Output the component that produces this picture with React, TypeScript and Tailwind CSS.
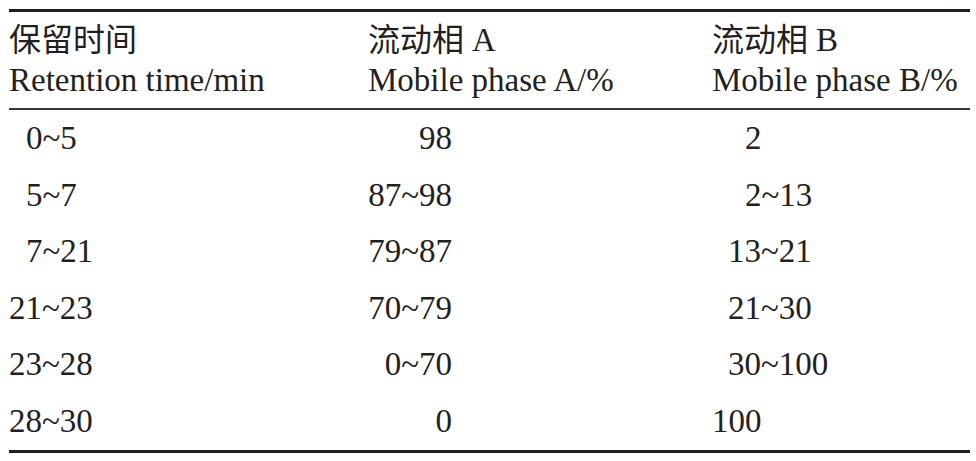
import React from "react";

const rows: { t: string; tp: string; a: string; b: string; bp: string }[] = [
  { t: "0~5", tp: "pl-[17px]", a: "98", b: "2", bp: "pl-[33px]" },
  { t: "5~7", tp: "pl-[17px]", a: "87~98", b: "2~13", bp: "pl-[33px]" },
  { t: "7~21", tp: "pl-[17px]", a: "79~87", b: "13~21", bp: "pl-[16px]" },
  { t: "21~23", tp: "pl-0", a: "70~79", b: "21~30", bp: "pl-[16px]" },
  { t: "23~28", tp: "pl-0", a: "0~70", b: "30~100", bp: "pl-[16px]" },
  { t: "28~30", tp: "pl-0", a: "0", b: "100", bp: "pl-0" },
];

function Cjk({ children }: { children: React.ReactNode }) {
  return (
    <span className="font-['Noto_Sans_CJK_SC',sans-serif] text-[32px] leading-none">
      {children}
    </span>
  );
}

export default function App() {
  return (
    <div className="w-[976px] h-[461px] bg-white pt-[9px] pl-[9px] font-['Liberation_Serif','Noto_Sans_CJK_SC',serif] text-[33px] text-[#231f20]">
      <div className="w-[961px] border-t-[3px] border-b-[3px] border-[#231f20]">
        <div className="flex pt-[8px] pb-[8px] border-b-[2px] border-[#3a3637] leading-[40px]">
          <div className="w-[359px]">
            <div className="h-[40px] whitespace-nowrap">
              <Cjk>保留时间</Cjk>
            </div>
            <div className="h-[40px] whitespace-nowrap">Retention time/min</div>
          </div>
          <div className="w-[344px]">
            <div className="h-[40px] whitespace-nowrap">
              <Cjk>流动相</Cjk>
              <span className="pl-[8px]">A</span>
            </div>
            <div className="h-[40px] whitespace-nowrap">Mobile phase A/%</div>
          </div>
          <div className="flex-1">
            <div className="h-[40px] whitespace-nowrap">
              <Cjk>流动相</Cjk>
              <span className="pl-[8px]">B</span>
            </div>
            <div className="h-[40px] whitespace-nowrap">Mobile phase B/%</div>
          </div>
        </div>
        <div className="flex flex-col">
          {rows.map((r, i) => (
            <div key={i} className="flex h-[56.6px] leading-[56.6px]">
              <div className={"w-[359px] " + r.tp}>{r.t}</div>
              <div className="w-[344px]">
                <div className="w-[84px] text-right">{r.a}</div>
              </div>
              <div className={"flex-1 " + r.bp}>{r.b}</div>
            </div>
          ))}
        </div>
      </div>
    </div>
  );
}
